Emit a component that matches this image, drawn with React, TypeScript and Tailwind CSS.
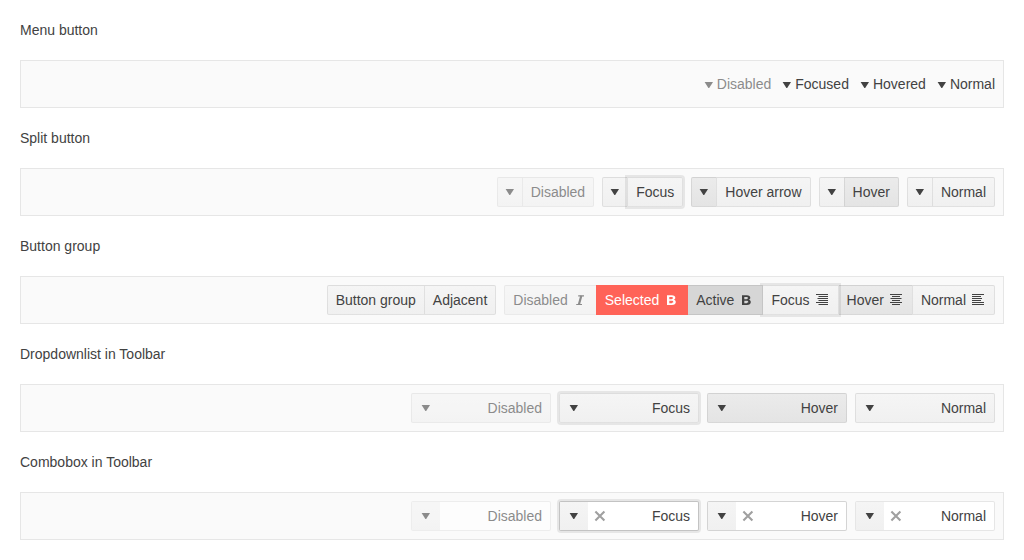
import React from "react";
import clsx from "clsx";

type State = "disabled" | "focus" | "hover" | "normal";

const face = "bg-linear-to-b from-[#f5f5f5] to-[#f0f0f0] border-black/8";
const hovered = "bg-linear-to-b from-[#ebebeb] to-[#e4e4e4] border-black/8";
const ring = "relative z-10 shadow-[0_0_0_2px_rgba(0,0,0,0.08)]";

function Caret({ className }: { className?: string }) {
  return (
    <svg className={clsx("size-4 shrink-0", className)} viewBox="0 0 16 16" fill="currentColor">
      <path d="M3.6 5h8.4L8.200 11h-.8z" />
    </svg>
  );
}

function Clear() {
  return (
    <svg className="size-4 shrink-0 text-[#a0a0a0]" viewBox="0 0 16 16" fill="none" stroke="currentColor" strokeWidth="2.1">
      <path d="M3.4 3.6l9 9M12.4 3.6l-9 9" />
    </svg>
  );
}

function Bold() {
  return (
    <svg className="size-4 shrink-0" viewBox="0 0 16 16" fill="currentColor" fillRule="evenodd">
      <path d="M4 3.2h4.800c2.300 0 3.500.9 3.500 2.500 0 1.100-.6 1.800-1.600 2.100 1.300.2 2.100 1.100 2.100 2.300 0 1.900-1.400 2.900-3.900 2.900H4zM6.300 4.900v2.300h2.100c1 0 1.500-.4 1.500-1.200s-.5-1.100-1.500-1.100zM6.300 8.800v2.500h2.300c1.100 0 1.700-.4 1.700-1.200s-.6-1.300-1.700-1.300z" />
    </svg>
  );
}

function Italic() {
  return (
    <svg className="size-4 shrink-0" viewBox="0 0 16 16" fill="none" stroke="currentColor">
      <path strokeWidth="1.2" d="M6.200 3.800H12M4.200 12.500h5.800" />
      <path strokeWidth="2.200" d="M9.300 3.800L6.900 12.500" />
    </svg>
  );
}

const lines = {
  left: "M2 2.5h12M2 4.5h9M2 6.5h10M2 8.5h9M2 10.5h12M2 12.5h12",
  center: "M2 2.5h12M4 4.5h8M2.5 6.5h11M4 8.5h8M2 10.5h12M4 12.5h8",
  right: "M2 2.5h12M4.5 4.5h9.5M3.5 6.5h10.5M4.5 8.5h9.5M2 10.5h12M4.5 12.5h9.5",
};

function Align({ to }: { to: keyof typeof lines }) {
  return (
    <svg className="size-4 shrink-0" viewBox="0 0 16 16" fill="none" stroke="currentColor">
      <path d={lines[to]} />
    </svg>
  );
}

function Button({ className, children }: { className?: string; children: React.ReactNode }) {
  return (
    <span className={clsx("flex h-[30px] items-center gap-1 border whitespace-nowrap", className)}>
      {children}
    </span>
  );
}

function Menu({ label, disabled }: { label: string; disabled?: boolean }) {
  return (
    <span className={clsx("flex items-center", disabled && "opacity-60")}>
      <Caret className="mt-0.5" />
      {label}
    </span>
  );
}

function Split({ label, arrow = face, main = face, disabled }: { label: string; arrow?: string; main?: string; disabled?: boolean }) {
  return (
    <span className={clsx("flex", disabled && "opacity-60")}>
      <Button className={clsx("rounded-l-xs px-1", arrow)}>
        <Caret />
      </Button>
      <Button className={clsx("-ml-px rounded-r-xs px-2", main)}>{label}</Button>
    </span>
  );
}

function Dropdown({ label, state }: { label: string; state: State }) {
  return (
    <span
      className={clsx(
        "flex h-[30px] w-[140px] items-center justify-between rounded-xs border pr-2 pl-1.5",
        state === "hover" ? hovered : face,
        state === "focus" && ring,
        state === "disabled" && "opacity-60",
      )}
    >
      <Caret />
      {label}
    </span>
  );
}

function Combo({ label, state }: { label: string; state: State }) {
  return (
    <span
      className={clsx(
        "flex h-[30px] w-[140px] items-stretch rounded-xs border bg-white bg-clip-padding",
        state === "focus" || state === "hover" ? "border-black/15" : "border-black/8",
        state === "focus" && ring,
        state === "disabled" && "opacity-60",
      )}
    >
      <span className="flex w-7 items-center justify-center bg-linear-to-b from-[#f5f5f5] to-[#f0f0f0]">
        <Caret />
      </span>
      <span className="flex flex-1 items-center justify-between pr-2 pl-1">
        {state === "disabled" ? <span /> : <Clear />}
        {label}
      </span>
    </span>
  );
}

function Section({ title, children }: { title: string; children: React.ReactNode }) {
  return (
    <section className="flex flex-col gap-5">
      <h2>{title}</h2>
      <div className="flex h-12 items-center justify-end gap-2 border border-black/8 bg-[#fafafa] px-2">
        {children}
      </div>
    </section>
  );
}

export default function App() {
  return (
    <main className="flex h-[560px] w-[1024px] flex-col gap-5 bg-white p-5 font-['Liberation_Sans',Arial,sans-serif] text-sm/5 text-[#424242]">
      <Section title="Menu button">
        <Menu label="Disabled" disabled />
        <Menu label="Focused" />
        <Menu label="Hovered" />
        <Menu label="Normal" />
      </Section>
      <Section title="Split button">
        <Split label="Disabled" disabled />
        <Split label="Focus" main={clsx(face, ring)} />
        <Split label="Hover arrow" arrow={hovered} />
        <Split label="Hover" main={hovered} />
        <Split label="Normal" />
      </Section>
      <Section title="Button group">
        <div className="flex">
          <Button className={clsx("rounded-l-xs px-2", face)}>Button group</Button>
          <Button className={clsx("-ml-px rounded-r-xs px-2", face)}>Adjacent</Button>
        </div>
        <div className="flex">
          <Button className={clsx("rounded-l-xs px-2 opacity-60", face)}>Disabled<Italic /></Button>
          <Button className="relative z-30 -ml-px border-[#ff6358] bg-[#ff6358] px-2 text-white">Selected<Bold /></Button>
          <Button className="relative z-20 -ml-px border-black/8 bg-[#d6d6d6] px-2">Active<Bold /></Button>
          <Button className={clsx("-ml-px px-2", face, ring)}>Focus<Align to="right" /></Button>
          <Button className={clsx("-ml-px px-2", hovered)}>Hover<Align to="center" /></Button>
          <Button className={clsx("-ml-px rounded-r-xs px-2", face)}>Normal<Align to="left" /></Button>
        </div>
      </Section>
      <Section title="Dropdownlist in Toolbar">
        <Dropdown label="Disabled" state="disabled" />
        <Dropdown label="Focus" state="focus" />
        <Dropdown label="Hover" state="hover" />
        <Dropdown label="Normal" state="normal" />
      </Section>
      <Section title="Combobox in Toolbar">
        <Combo label="Disabled" state="disabled" />
        <Combo label="Focus" state="focus" />
        <Combo label="Hover" state="hover" />
        <Combo label="Normal" state="normal" />
      </Section>
    </main>
  );
}
